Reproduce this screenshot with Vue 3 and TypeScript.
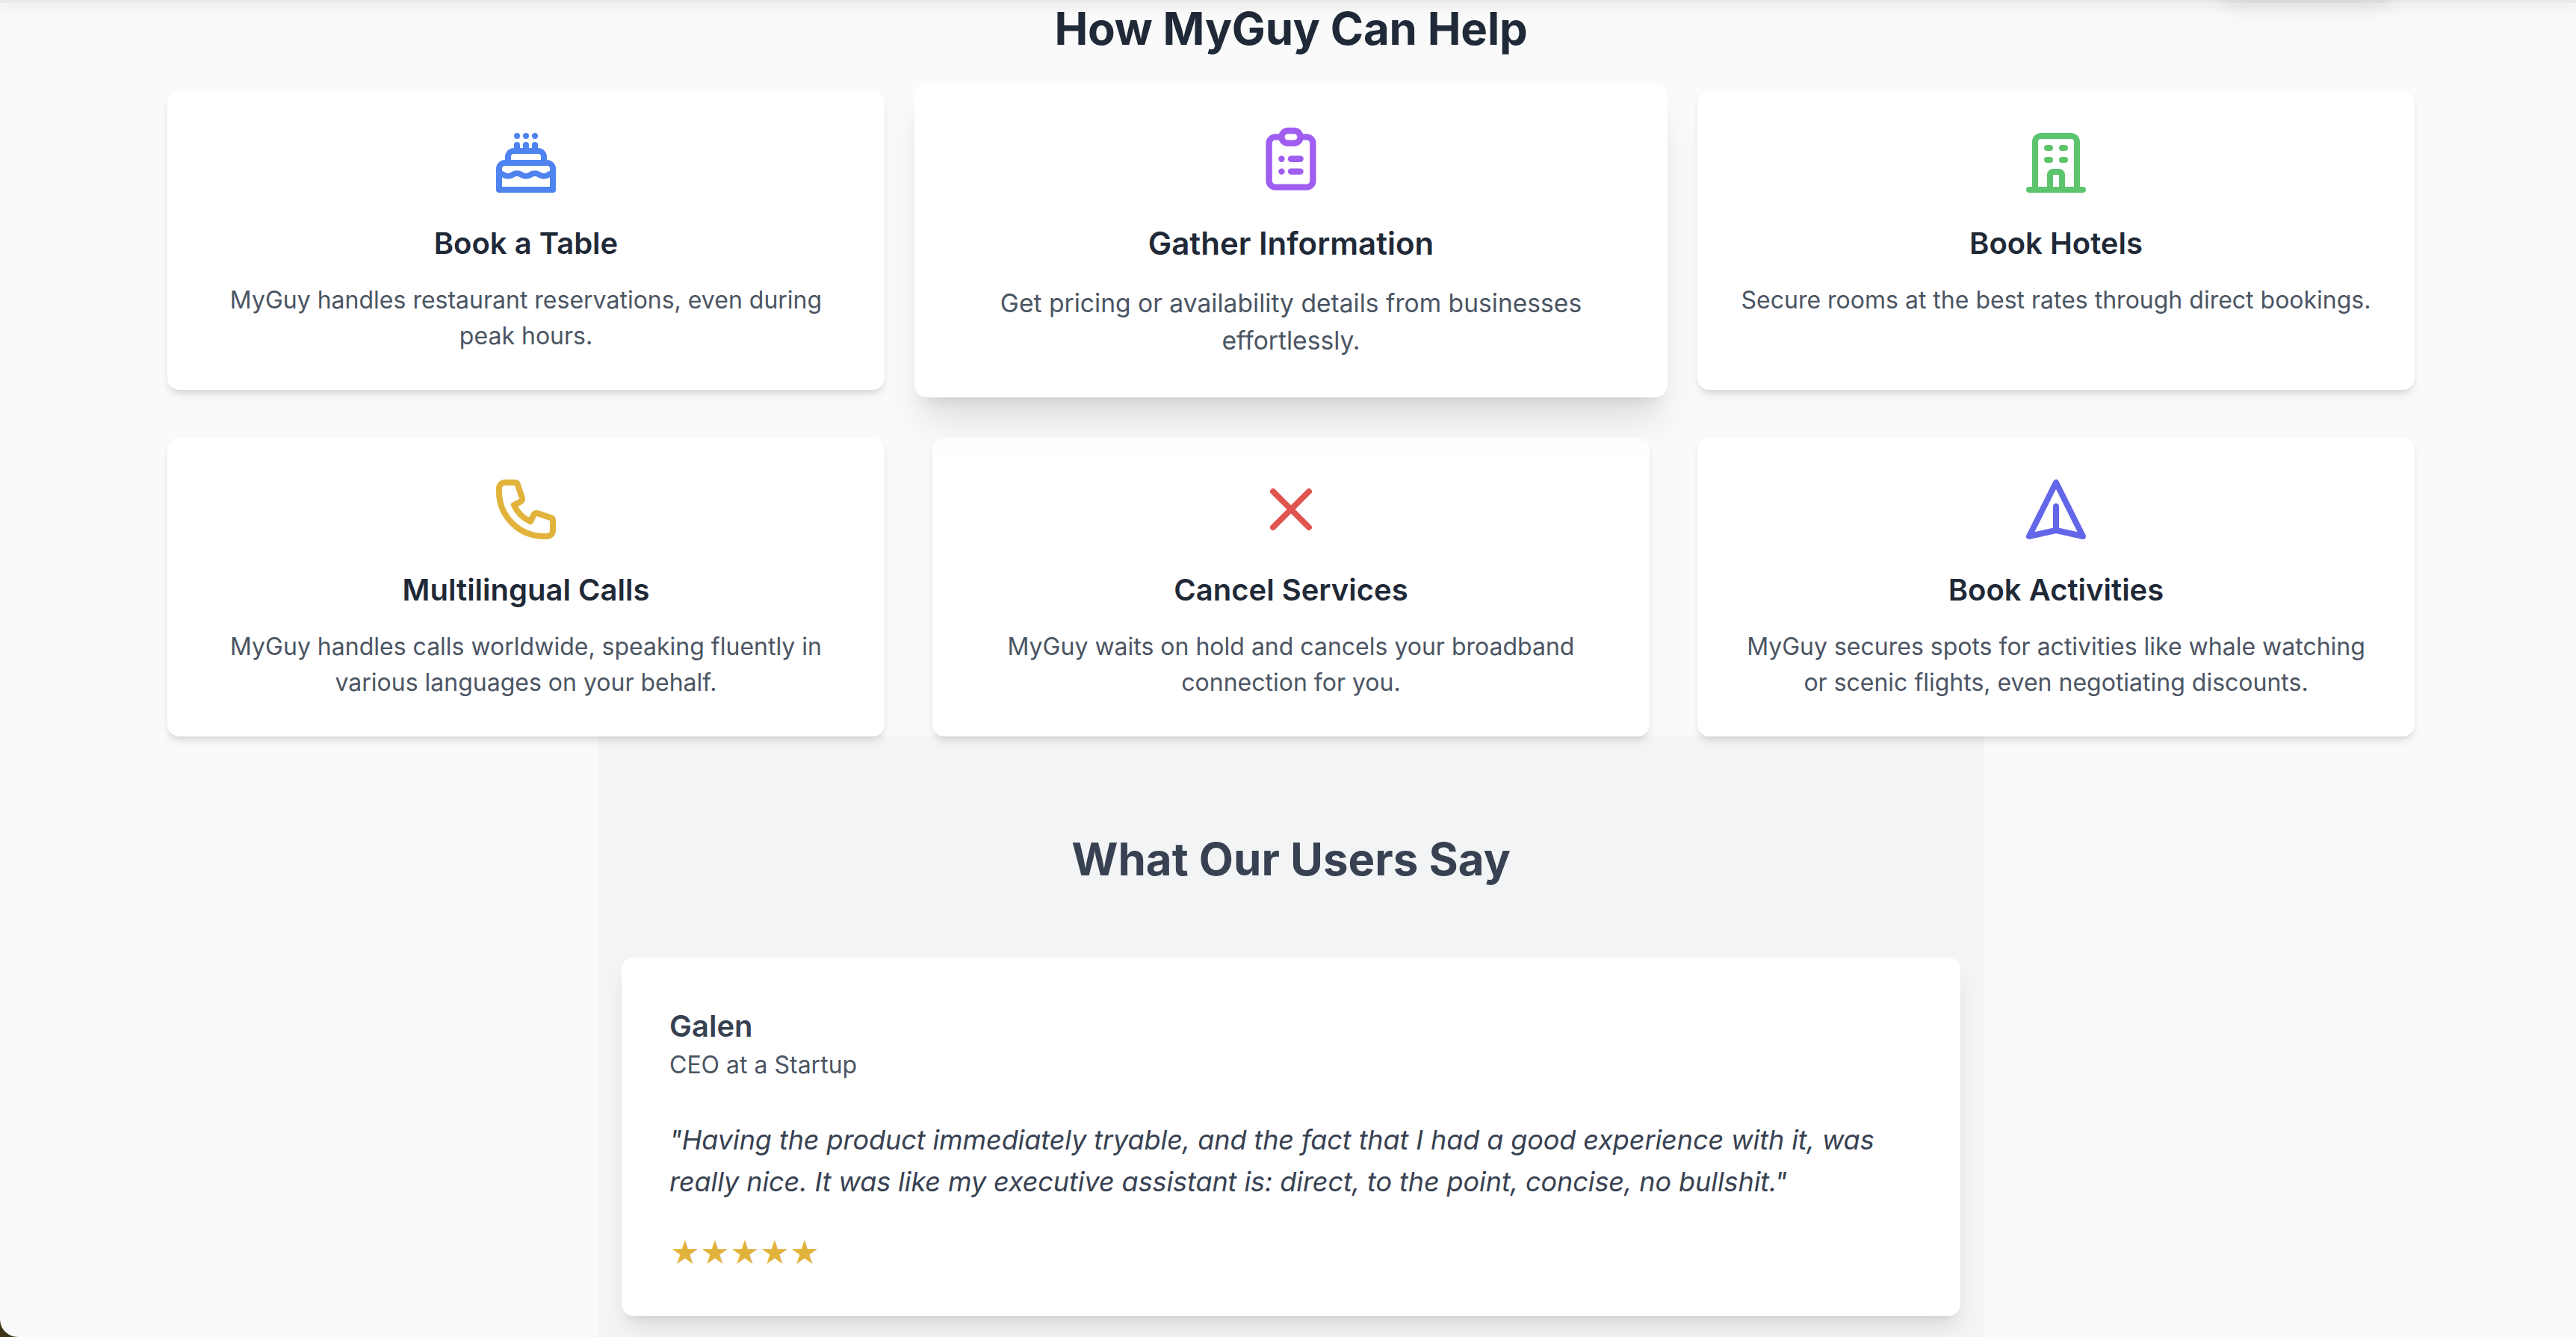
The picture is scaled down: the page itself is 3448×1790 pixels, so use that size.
<script setup lang="ts">
interface Service {
  title: string
  text: string
  color: string
  paths: string[]
  raised?: boolean
}

const services: Service[] = [
  {
    title: 'Book a Table',
    text: 'MyGuy handles restaurant reservations, even during peak hours.',
    color: '#4f83ef',
    paths: [
      'M21 15.546c-.523 0-1.046.151-1.5.454a2.704 2.704 0 01-3 0 2.704 2.704 0 00-3 0 2.704 2.704 0 01-3 0 2.704 2.704 0 00-3 0 2.704 2.704 0 01-3 0 2.701 2.701 0 00-1.5-.454M9 6v2m3-2v2m3-2v2M9 3h.01M12 3h.01M15 3h.01M21 21v-7a2 2 0 00-2-2H5a2 2 0 00-2 2v7h18zm-3-9v-2a2 2 0 00-2-2H8a2 2 0 00-2 2v2h12z'
    ]
  },
  {
    title: 'Gather Information',
    text: 'Get pricing or availability details from businesses effortlessly.',
    color: '#9f5ef0',
    raised: true,
    paths: [
      'M9 5H7a2 2 0 00-2 2v12a2 2 0 002 2h10a2 2 0 002-2V7a2 2 0 00-2-2h-2M9 5a2 2 0 002 2h2a2 2 0 002-2M9 5a2 2 0 012-2h2a2 2 0 012 2m-3 7h3m-3 4h3m-6-4h.01M9 16h.01'
    ]
  },
  {
    title: 'Book Hotels',
    text: 'Secure rooms at the best rates through direct bookings.',
    color: '#5cc46c',
    paths: [
      'M19 21V5a2 2 0 00-2-2H7a2 2 0 00-2 2v16m14 0h2m-2 0h-5m-9 0H3m2 0h5M9 7h1m-1 4h1m4-4h1m-1 4h1m-5 10v-5a1 1 0 011-1h2a1 1 0 011 1v5m-4 0h4'
    ]
  },
  {
    title: 'Multilingual Calls',
    text: 'MyGuy handles calls worldwide, speaking fluently in various languages on your behalf.',
    color: '#e2b33c',
    paths: [
      'M3 5a2 2 0 012-2h3.28a1 1 0 01.948.684l1.498 4.493a1 1 0 01-.502 1.21l-2.257 1.13a11.042 11.042 0 005.516 5.516l1.13-2.257a1 1 0 011.21-.502l4.493 1.498a1 1 0 01.684.949V19a2 2 0 01-2 2h-1C9.716 21 3 14.284 3 6V5z'
    ]
  },
  {
    title: 'Cancel Services',
    text: 'MyGuy waits on hold and cancels your broadband connection for you.',
    color: '#e05550',
    paths: ['M6 18L18 6M6 6l12 12']
  },
  {
    title: 'Book Activities',
    text: 'MyGuy secures spots for activities like whale watching or scenic flights, even negotiating discounts.',
    color: '#6366e9',
    paths: ['M12 19l9 2-9-18-9 18 9-2zm0 0v-8']
  }
]
</script>

<template>
  <div class="page">
    <header class="topbar"><span class="topbar-button"></span></header>

    <main class="content">
      <h2 class="help-title">How MyGuy Can Help</h2>
      <div class="grid">
        <article
          v-for="service in services"
          :key="service.title"
          class="card"
          :class="{ raised: service.raised }"
        >
          <svg
            class="icon"
            viewBox="0 0 24 24"
            fill="none"
            stroke-width="2"
            stroke-linecap="round"
            stroke-linejoin="round"
            :stroke="service.color"
          >
            <path v-for="d in service.paths" :key="d" :d="d" />
          </svg>
          <h3 class="card-title">{{ service.title }}</h3>
          <p class="card-text">{{ service.text }}</p>
        </article>
      </div>

      <section class="users">
        <h2 class="users-title">What Our Users Say</h2>
        <article class="quote-card">
          <h3 class="name">Galen</h3>
          <p class="role">CEO at a Startup</p>
          <p class="quote">"Having the product immediately tryable, and the fact that I had a good experience with it, was really nice. It was like my executive assistant is: direct, to the point, concise, no bullshit."</p>
          <div class="stars">★★★★★</div>
        </article>
      </section>
    </main>
  </div>
</template>

<style scoped>
.page {
  position: relative;
  height: 1790px;
  overflow: hidden;
  background: #fafafa;
  border-bottom-left-radius: 24px;
  font-family: Inter, "Liberation Sans", sans-serif;
}

.topbar {
  position: absolute;
  top: 0;
  left: 0;
  right: 0;
  height: 4px;
  z-index: 3;
  background: #e9e9e9;
  box-shadow: 0 4px 14px rgba(0, 0, 0, 0.16);
}

.topbar-button {
  position: absolute;
  left: 2970px;
  width: 235px;
  top: -60px;
  height: 60px;
  border-radius: 16px;
  box-shadow: 0 20px 30px -6px rgba(0, 0, 0, 0.06), 0 8px 12px -6px rgba(0, 0, 0, 0.03);
}

.content {
  padding: 2px 216px 0 224px;
}

.help-title {
  margin: 0 0 48px;
  font-size: 60px;
  line-height: 72px;
  font-weight: 700;
  letter-spacing: -0.2px;
  color: #1f2937;
  text-align: center;
}

.grid {
  display: grid;
  grid-template-columns: repeat(3, 1fr);
  gap: 64px;
}

.card {
  position: relative;
  z-index: 1;
  box-sizing: border-box;
  padding: 48px;
  background: #fff;
  border-radius: 16px;
  text-align: center;
  box-shadow: 0 8px 12px -2px rgba(0, 0, 0, 0.1), 0 4px 8px -4px rgba(0, 0, 0, 0.1);
}

.raised {
  z-index: 2;
  transform: scale(1.05);
  box-shadow: 0 40px 50px -10px rgba(0, 0, 0, 0.1), 0 16px 20px -12px rgba(0, 0, 0, 0.1);
}

.icon {
  display: block;
  width: 96px;
  height: 96px;
  margin: 0 auto 32px;
}

.card-title {
  margin: 0 0 24px;
  font-size: 40px;
  line-height: 56px;
  font-weight: 600;
  color: #1f2937;
}

.card-text {
  margin: 0;
  font-size: 32px;
  line-height: 48px;
  color: #4b5563;
}

.users {
  width: 1856px;
  margin: 0 auto;
  box-sizing: border-box;
  padding: 128px 32px 64px;
  background: #f3f4f6;
}

.users-title {
  margin: 0 0 96px;
  font-size: 60px;
  line-height: 72px;
  font-weight: 700;
  color: #374151;
  text-align: center;
}

.quote-card {
  box-sizing: border-box;
  padding: 64px;
  background: #fff;
  border-radius: 16px;
  box-shadow: 0 20px 30px -6px rgba(0, 0, 0, 0.1), 0 8px 12px -8px rgba(0, 0, 0, 0.1);
}

.name {
  margin: 0;
  font-size: 40px;
  line-height: 56px;
  font-weight: 600;
  color: #374151;
}

.role {
  margin: 0 0 48px;
  font-size: 32px;
  line-height: 48px;
  color: #4b5563;
}

.quote {
  margin: 0 0 32px;
  font-size: 36px;
  line-height: 56px;
  font-style: italic;
  letter-spacing: -0.08px;
  color: #374151;
}

.stars {
  box-sizing: border-box;
  height: 56px;
  padding: 8px 0 0 3px;
  font-family: "Noto Sans CJK SC", "DejaVu Sans", sans-serif;
  font-size: 36px;
  line-height: 48px;
  letter-spacing: 4px;
  color: #e2b33c;
}
</style>

<style>
html,
body {
  margin: 0;
  background: #3f3416;
}
</style>
